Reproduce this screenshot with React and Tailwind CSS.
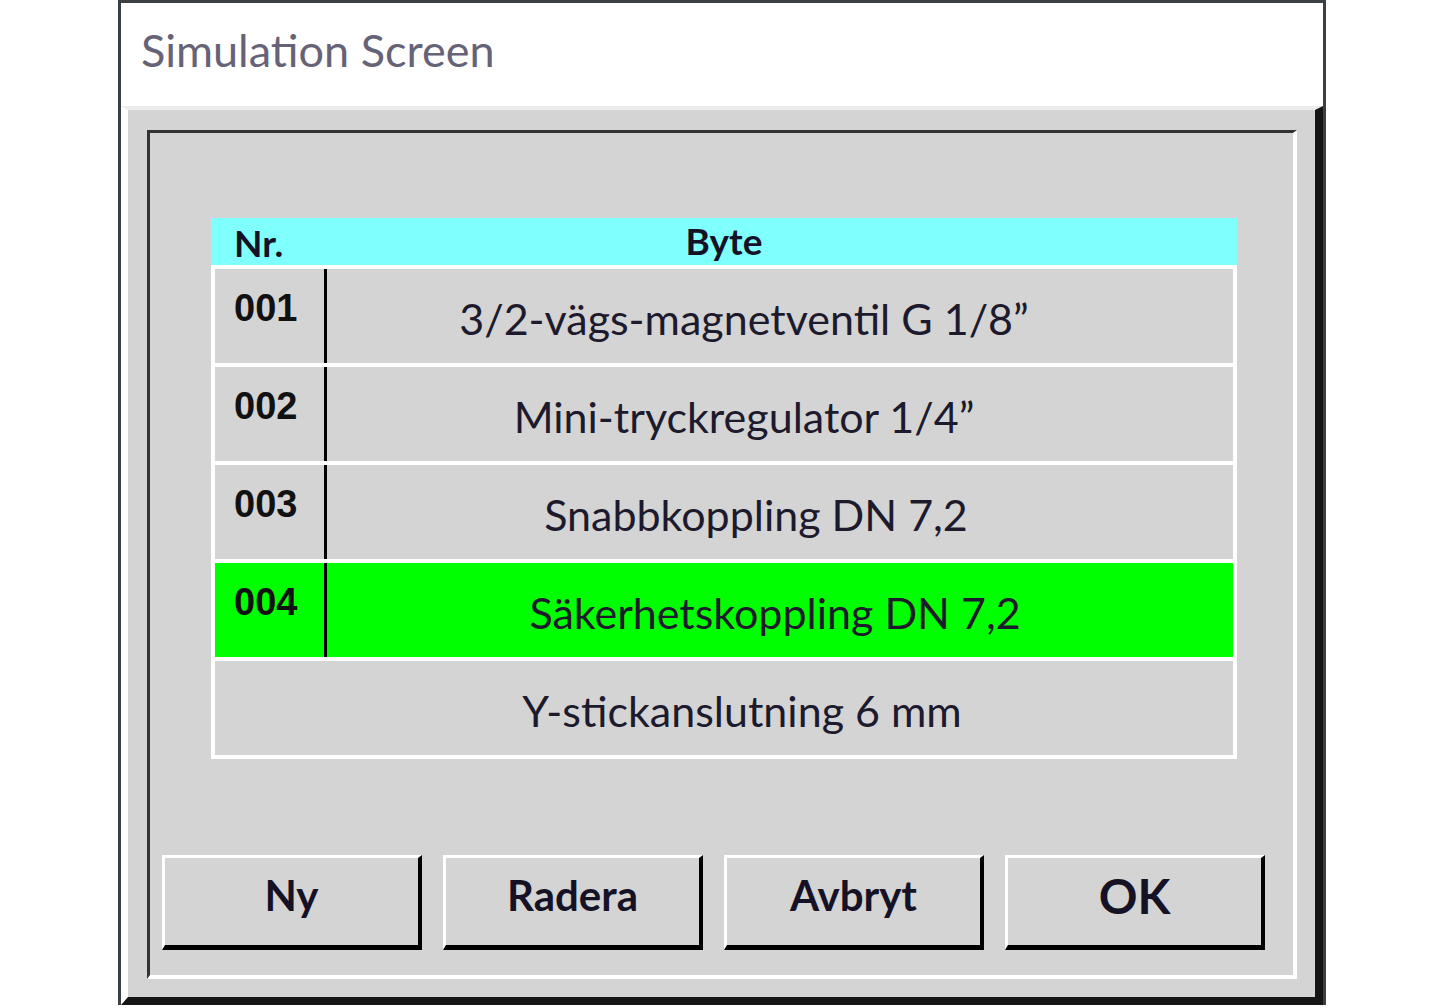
const rows = [
  { nr: '001', text: '3/2-vägs-magnetventil G 1/8”', bg: 'bg-[#d4d4d4]', pad: 'pr-[72px]' },
  { nr: '002', text: 'Mini-tryckregulator 1/4”', bg: 'bg-[#d4d4d4]', pad: 'pr-[72px]' },
  { nr: '003', text: 'Snabbkoppling DN 7,2', bg: 'bg-[#d4d4d4]', pad: 'pr-[48px]' },
  { nr: '004', text: 'Säkerhetskoppling DN 7,2', bg: 'bg-[#00ff00]', pad: 'pr-[10px]' },
  { nr: null, text: 'Y-stickanslutning 6 mm', bg: 'bg-[#d4d4d4]', pad: 'pl-[36px]' },
]

const buttons = [
  { label: 'Ny', size: 'text-[42px]' },
  { label: 'Radera', size: 'text-[42px]' },
  { label: 'Avbryt', size: 'text-[42px]' },
  { label: 'OK', size: 'text-[48px]' },
]

export default function App() {
  return (
    <div className="w-[1440px] h-[1008px] bg-white flex overflow-hidden">
      {/* Window */}
      <div className="ml-[118px] w-[1208px] h-[1005px] flex flex-col border-l-[3px] border-r-[3px] border-t-[3px] border-[#3b4045] bg-white">
        {/* Title */}
        <div className="h-[103px] flex items-start pl-[20px] pt-[25px]">
          <span className="text-[45px] leading-none text-[#676377] font-['Lato',sans-serif]">Simulation Screen</span>
        </div>

        {/* Outer raised panel */}
        <div className="flex-1 flex flex-col bg-[#d4d4d4] border-t-[4px] border-l-[7px] border-t-[#ececec] border-l-white border-r-[8px] border-b-[8px] border-r-[#151515] border-b-[#151515] pt-[20px] pl-[19px] pr-[18px] pb-[18px]">
          {/* Inner sunken panel */}
          <div className="flex-1 flex flex-col border-t-[3px] border-l-[3px] border-t-[#333] border-l-[#333] border-r-[4px] border-b-[4px] border-r-white border-b-white pt-[85px] pl-[61px] pr-[56px]">
            {/* Table */}
            <div className="flex flex-col">
              <div className="h-[47px] pb-[2px] bg-[#80ffff] grid grid-cols-[1fr_auto_1fr] items-center font-['Lato',sans-serif] font-bold text-[37px] leading-none text-[#161226]">
                <span className="pl-[23px] pt-[4px]">Nr.</span>
                <span>Byte</span>
                <span />
              </div>
              <div className="flex flex-col gap-[4px] bg-white p-[4px]">
                {rows.map((r, i) => (
                  <div key={i} className={`h-[94px] flex ${r.bg}`}>
                    {r.nr && (
                      <>
                        <div className="w-[109px] pl-[19px] pt-[20px] font-['Liberation_Sans',sans-serif] font-bold text-[38px] leading-none text-[#111]">
                          {r.nr}
                        </div>
                        <div className="w-[3px] bg-black" />
                      </>
                    )}
                    <div className={`flex-1 flex items-center justify-center pt-[6px] ${r.pad} font-['Lato',sans-serif] text-[43px] text-[#1c1a2c]`}>
                      {r.text}
                    </div>
                  </div>
                ))}
              </div>
            </div>

            {/* Buttons */}
            <div className="mt-auto mb-[25px] -ml-[49px] -mr-[31px] flex gap-[21px]">
              {buttons.map((b) => (
                <div
                  key={b.label}
                  className={`w-[260px] h-[95px] shrink-0 flex items-center justify-center pb-[12px] border-t-[3px] border-l-[3px] border-white border-r-[4px] border-b-[5px] border-r-black border-b-black font-['Lato',sans-serif] font-bold ${b.size} text-[#161226]`}
                >
                  {b.label}
                </div>
              ))}
            </div>
          </div>
        </div>
      </div>
    </div>
  )
}
